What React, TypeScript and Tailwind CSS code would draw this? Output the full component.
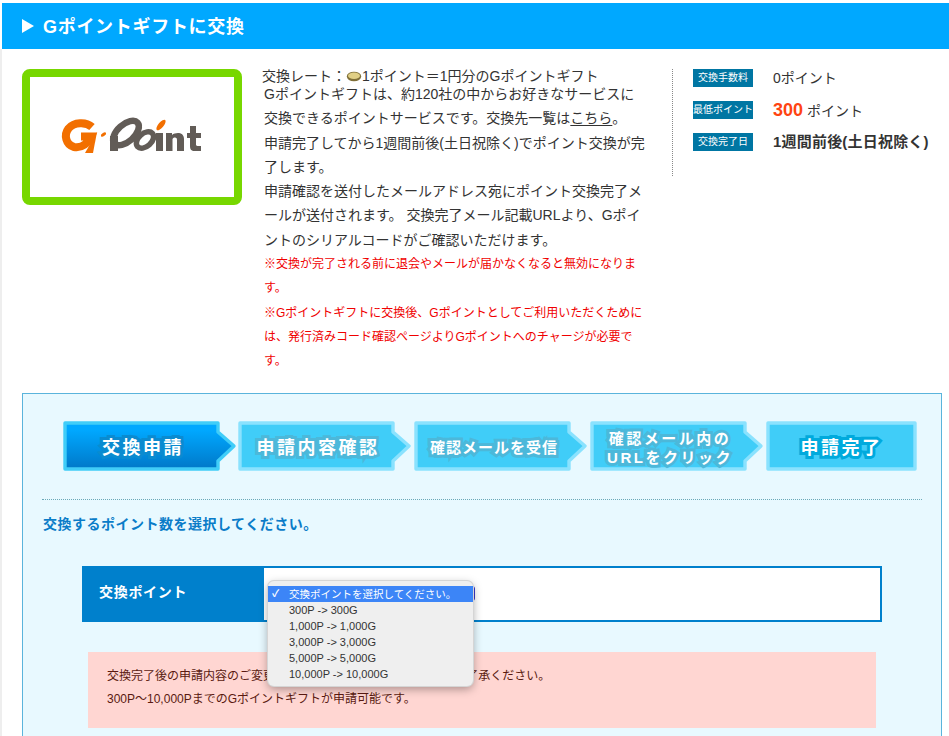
const JP = "font-['Liberation_Sans','Noto_Sans_CJK_JP',sans-serif]";

function Logo() {
  return (
    <svg width="155" height="50" viewBox="0 0 155 50" aria-label="G-Point">
      <path
        d="M36 15 C30 9.500 18 10 12.500 16.500 C7.500 23 10 33 18 35 C26 36.500 32 31 35 24.500 L25 24.500"
        fill="none"
        stroke="#f26f00"
        strokeWidth="8"
      />
      <path d="M29 41 L41 20 L37 41 Z" fill="#f26f00" />
      <ellipse cx="47.500" cy="22.500" rx="3" ry="1.600" fill="#f26f00" transform="rotate(-35 47.500 22.500)" />
      <ellipse cx="70" cy="21" rx="15.500" ry="8.500" fill="none" stroke="#625c57" strokeWidth="6.500" transform="rotate(-42 70 21)" />
      <path d="M54 24 L62 24 L62 39 L54 39 Z" fill="#625c57" />
      <ellipse cx="89" cy="28" rx="10" ry="6.500" fill="none" stroke="#625c57" strokeWidth="5.500" transform="rotate(-42 89 28)" />
      <ellipse cx="105" cy="13" rx="6.500" ry="2.600" fill="#f26f00" transform="rotate(-50 105 13)" />
      <path
        d="M100 21 H107 V39 H100 Z M110 21 H116 V23 C120 20 128 20 128 27 V39 H121 V28 C121 25 118 25 116.500 27 V39 H110 Z M134 14 H140 V21 H145 V26 H140 V33 C140 34 142 34 145 34 V39 H139 C135 39 134 37 134 34 V26 H131 V21 H134 Z"
        fill="#625c57"
      />
    </svg>
  );
}

function Coin() {
  return (
    <svg width="16" height="11" viewBox="0 0 16 11" className="inline-block align-[-1px]">
      <ellipse cx="8" cy="5.500" rx="7.200" ry="4.800" fill="#7f6f38" />
      <ellipse cx="8" cy="4.800" rx="6" ry="3.200" fill="#e0cf85" />
    </svg>
  );
}

function StepShape({ width, arrow, fill, gradient, stroke }: { width: number; arrow: boolean; fill: string; gradient?: boolean; stroke: string }) {
  const r = arrow ? width - 17 : width;
  const pts = arrow
    ? `2,2 ${r - 2},2 ${r - 2},11 ${width - 3},25 ${r - 2},40 ${r - 2},48 2,48`
    : `2,2 ${r - 2},2 ${r - 2},48 2,48`;
  return (
    <svg width={width} height="50" viewBox={`0 0 ${width} 50`} className="absolute left-0 top-0">
      <defs>
        <linearGradient id="activeStep" x1="0" y1="0" x2="0" y2="1">
          <stop offset="0.15" stopColor="#00a8ff" />
          <stop offset="1" stopColor="#0078c8" />
        </linearGradient>
      </defs>
      <polygon points={pts} fill={gradient ? "url(#activeStep)" : fill} stroke={stroke} strokeWidth="3.400" strokeLinejoin="round" />
    </svg>
  );
}

function Step({ lines, active, last, textClass, outline }: { lines: string[]; active?: boolean; last?: boolean; textClass: string; outline: string }) {
  return (
    <div className={`relative flex h-[50px] shrink-0 items-center justify-center pt-[3px] ${last ? "w-[151px]" : "w-[174px] pr-[14px]"} ${active ? "-mr-px" : ""}`}>
      <StepShape width={last ? 151 : 174} arrow={!last} fill="#40cdf8" gradient={active} stroke={active ? "#40cdf8" : "#8ae2fe"} />
      <div className={`relative text-center font-bold text-white [paint-order:stroke_fill] ${outline} ${textClass}`}>
        {lines.map((l) => (
          <div key={l} className="whitespace-nowrap">{l}</div>
        ))}
      </div>
    </div>
  );
}

function Badge({ children }: { children: string }) {
  return (
    <div className="flex h-[18px] w-[60px] shrink-0 items-center justify-center whitespace-nowrap bg-[#0076a3] text-[10px] leading-none text-white">
      {children}
    </div>
  );
}

export default function App() {
  const options = ["300P -> 300G", "1,000P -> 1,000G", "3,000P -> 3,000G", "5,000P -> 5,000G", "10,000P -> 10,000G"];
  return (
    <div className={`flex h-[736px] w-[949px] overflow-hidden bg-white text-[#333] ${JP}`}>
      <div className="mt-[49px] w-[2px] shrink-0 bg-[#eeeeee]" />
      <div className="w-[947px] shrink-0 pt-[3px]">
        <div className="flex h-[46px] items-center bg-[#00a8ff] pl-[20px] text-white">
          <span className="h-0 w-0 border-y-[7px] border-l-[12px] border-y-transparent border-l-white" />
          <span className="ml-[9px] pt-[2px] text-[18px] font-bold leading-none tracking-[0.7px]">Gポイントギフトに交換</span>
        </div>

        <div className="flex h-[344px] pl-[20px] pt-[20px]">
          <div className="flex h-[136px] w-[220px] shrink-0 items-center justify-center rounded-[8px] border-[8px] border-[#77d700] bg-white pl-[2px]">
            <Logo />
          </div>

          <div className="ml-[20px] w-[400px] shrink-0 text-[14px]">
            <div className="h-[13px] whitespace-nowrap leading-[14px]">
              交換レート：<Coin />1ポイント＝1円分のGポイントギフト
            </div>
            <div className="pl-[2px] leading-[24.3px]">
              <div className="whitespace-nowrap">Gポイントギフトは、約120社の中からお好きなサービスに</div>
              <div className="whitespace-nowrap">交換できるポイントサービスです。交換先一覧は<span className="underline underline-offset-2">こちら</span>。</div>
              <div className="whitespace-nowrap">申請完了してから1週間前後(土日祝除く)でポイント交換が完</div>
              <div className="whitespace-nowrap">了します。</div>
              <div className="whitespace-nowrap">申請確認を送付したメールアドレス宛にポイント交換完了メ</div>
              <div className="whitespace-nowrap">ールが送付されます。 交換完了メール記載URLより、Gポイ</div>
              <div className="whitespace-nowrap">ントのシリアルコードがご確認いただけます。</div>
              <div className="text-[12px] text-[#f00000]">
                <div className="whitespace-nowrap">※交換が完了される前に退会やメールが届かなくなると無効になりま</div>
                <div className="whitespace-nowrap">す。</div>
                <div className="whitespace-nowrap">※Gポイントギフトに交換後、Gポイントとしてご利用いただくために</div>
                <div className="whitespace-nowrap">は、発行済みコード確認ページよりGポイントへのチャージが必要で</div>
                <div className="whitespace-nowrap">す。</div>
              </div>
            </div>
          </div>

          <div className="ml-[10px] flex h-[107px] w-[270px] shrink-0 flex-col gap-[14px] border-l border-dotted border-[#888] pl-[20px]">
            <div className="flex h-[18px] items-center gap-[20px] text-[14px]">
              <Badge>交換手数料</Badge>
              <span className="whitespace-nowrap">0ポイント</span>
            </div>
            <div className="flex h-[18px] items-center gap-[20px] text-[14px]">
              <Badge>最低ポイント</Badge>
              <span className="whitespace-nowrap"><span className="text-[18px] font-bold text-[#ff4411]">300</span> ポイント</span>
            </div>
            <div className="flex h-[18px] items-center gap-[20px] text-[14px]">
              <Badge>交換完了日</Badge>
              <span className="whitespace-nowrap text-[15px] font-bold tracking-[0.2px]">1週間前後(土日祝除く)</span>
            </div>
          </div>
        </div>

        <div className="relative ml-[20px] h-[400px] w-[920px] border border-[#5ab4dc] bg-[#e8f9ff]">
          <div className="flex gap-[2px] pl-[40px] pt-[27px]">
            <Step active lines={["交換申請"]} textClass="text-[18px] leading-[22px] tracking-[2.5px]" outline="[-webkit-text-stroke:6px_#0a8bd0]" />
            <Step lines={["申請内容確認"]} textClass="text-[18px] leading-[22px] tracking-[2.5px]" outline="[-webkit-text-stroke:6px_#4cb8da]" />
            <Step lines={["確認メールを受信"]} textClass="text-[15px] leading-[20px] tracking-[1px]" outline="[-webkit-text-stroke:6px_#4cb8da]" />
            <Step lines={["確認メール内の", "URLをクリック"]} textClass="text-[15px] leading-[19px] tracking-[2.5px]" outline="[-webkit-text-stroke:6px_#4cb8da]" />
            <Step last lines={["申請完了"]} textClass="text-[18px] leading-[22px] tracking-[2.5px]" outline="[-webkit-text-stroke:6px_#00aadd]" />
          </div>

          <div className="mx-[19px] mt-[28px] border-t border-dotted border-[#6aa9b8]" />

          <div className="ml-[20px] mt-[14px] text-[14px] font-bold leading-[20px] tracking-[0.5px] text-[#0a7cc8]">
            交換するポイント数を選択してください。
          </div>

          <div className="relative ml-[59px] mt-[32px] flex h-[56px] w-[800px]">
            <div className="flex w-[182px] shrink-0 items-center bg-[#0080cc] pb-[3px] pl-[17px] text-[14px] font-bold tracking-[0.7px] text-white">
              交換ポイント
            </div>
            <div className="flex-1 border-2 border-l-0 border-[#0080cc] bg-white" />

            <div className="absolute left-[186px] top-[20px] h-[15px] w-[207px] rounded-r-[3px] bg-[#3a36c8]" />
            <div className="absolute left-[186px] top-[15px] w-[205px] rounded-[6px] bg-[#efefef] pb-[4px] pt-[5px] text-[11px] text-[#333] shadow-[0_3px_10px_rgba(0,0,0,0.35)] ring-1 ring-[#d5d5d5]">
              <div className="flex h-[16px] items-center bg-[#3c85f7] leading-none text-white">
                <span className="w-[21px] pl-[4px] text-[10px] font-bold">✓</span>
                <span className="whitespace-nowrap text-[10.5px]">交換ポイントを選択してください。</span>
              </div>
              {options.map((o) => (
                <div key={o} className="flex h-[16px] items-center whitespace-nowrap pl-[21px] leading-none">{o}</div>
              ))}
            </div>
          </div>

          <div className="ml-[65px] mt-[30px] h-[76px] w-[788px] bg-[#ffd6d2] pl-[19px] pt-[13px] text-[12px] leading-[23px] text-[#5a1a10]">
            <div className="whitespace-nowrap">交換完了後の申請内容のご変更・キャンセルはできませんので、ご了承ください。</div>
            <div className="whitespace-nowrap">300P〜10,000PまでのGポイントギフトが申請可能です。</div>
          </div>
        </div>
      </div>
    </div>
  );
}
